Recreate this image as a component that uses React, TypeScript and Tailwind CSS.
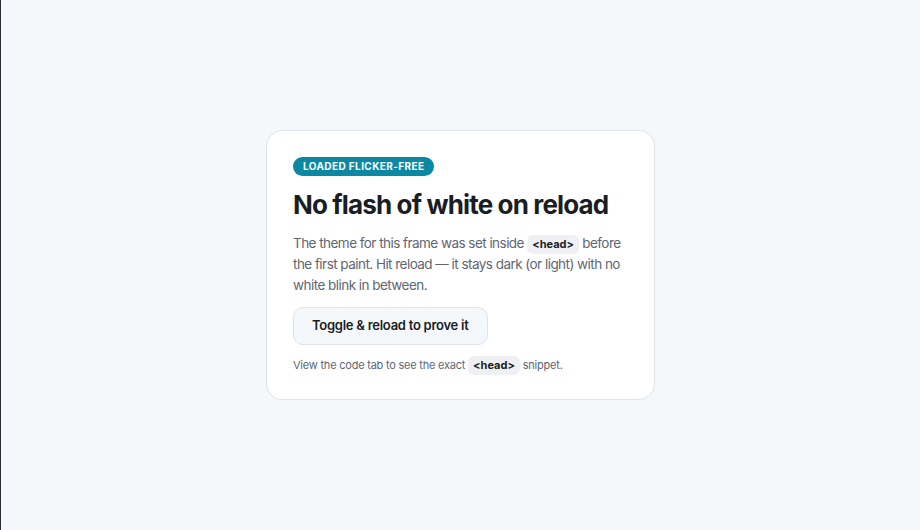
import React from 'react';

function Code({ children }: { children: React.ReactNode }) {
    return (
        <code className="inline-block rounded-md bg-[#eef0f3] px-[5px] py-[2px] font-bold text-[11px] leading-[15px] tracking-normal text-[#1a1d24] [font-family:Inter,sans-serif]">
            {children}
        </code>
    );
}

export default function App() {
    return (
        <div className="flex h-[530px] w-full items-center justify-center border-l border-[#2b3038] bg-[#f5f8fb] [font-family:Inter,'Noto_Sans',sans-serif]">
            <div className="w-[389px] rounded-2xl border border-[#dfe3e8] bg-white px-[26px] pt-[26px] pb-[24px]">
                <div className="flex">
                    <span className="rounded-full bg-[#0b88a2] px-[10px] py-[3px] font-bold text-[10px] leading-[13px] tracking-[0.04em] text-white">
                        LOADED FLICKER-FREE
                    </span>
                </div>
                <h1 className="mt-[13px] font-bold text-[26px] leading-[32px] tracking-[-0.033em] text-[#1a1d24]">
                    No flash of white on reload
                </h1>
                <p className="mt-[12px] text-[13.5px] leading-[20.5px] tracking-[-0.04em] text-[#5f6673]">
                    The theme for this frame was set inside <Code>&lt;head&gt;</Code> before the first paint.
                    Hit reload — it stays dark (or light) with no white blink in between.
                </p>
                <button
                    type="button"
                    className="mt-[12px] h-[38px] rounded-[10px] border border-[#dfe3e8] bg-[#f5f8fb] px-[18px] font-semibold text-[13px] tracking-[-0.02em] text-[#1a1d24]"
                >
                    Toggle &amp; reload to prove it
                </button>
                <p className="mt-[11px] text-[11px] leading-[19px] tracking-[-0.02em] text-[#5f6673]">
                    View the code tab to see the exact <Code>&lt;head&gt;</Code> snippet.
                </p>
            </div>
        </div>
    );
}
